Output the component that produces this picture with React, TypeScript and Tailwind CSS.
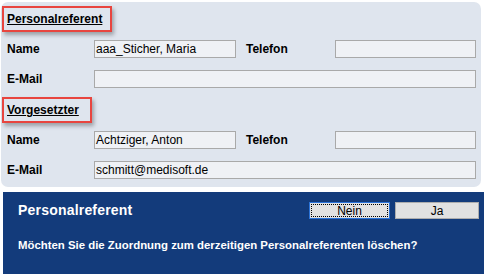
const font = { fontFamily: '"Liberation Sans", Arial, sans-serif' };

const Field: React.FC<{ value?: string; className?: string }> = ({ value, className }) => (
  <div
    className={`h-[18px] border border-[#a9a9a9] bg-[#eff1f5] px-[1px] text-[12px] leading-[16px] text-black whitespace-nowrap overflow-hidden ${className ?? ""}`}
  >
    {value}
  </div>
);

const Heading: React.FC<{ title: string; width: string }> = ({ title, width }) => (
  <div
    className={`ml-[1px] h-[26px] ${width} border-2 border-[#e8453f] pl-[3px] flex items-center shadow-[2px_3px_4px_rgba(0,0,0,0.3)]`}
  >
    <span className="text-[12px] font-bold underline text-black leading-none">{title}</span>
  </div>
);

const Section: React.FC<{
  title: string;
  width: string;
  name: string;
  phone: string;
  mail: string;
}> = ({ title, width, name, phone, mail }) => (
  <div className="flex flex-col">
    <Heading title={title} width={width} />
    <div className="mt-[8px] flex items-center h-[18px]">
      <span className="w-[93px] pl-[6px] text-[12px] font-bold text-black">Name</span>
      <Field value={name} className="w-[142px]" />
      <span className="w-[99px] pl-[10px] text-[12px] font-bold text-black">Telefon</span>
      <Field value={phone} className="w-[141px]" />
    </div>
    <div className="mt-[12px] flex items-center h-[18px]">
      <span className="w-[93px] pl-[6px] text-[12px] font-bold text-black">E-Mail</span>
      <Field value={mail} className="w-[382px]" />
    </div>
  </div>
);

export default function App() {
  return (
    <div className="w-[484px] h-[274px] bg-white overflow-hidden" style={font}>
      <div className="ml-[1px] mt-[2px] w-[480px] h-[185px] rounded-[7px] bg-[#dfe5ee] pt-[4px] flex flex-col gap-[9px]">
        <Section
          title="Personalreferent"
          width="w-[110px]"
          name="aaa_Sticher, Maria"
          phone=""
          mail=""
        />
        <Section
          title="Vorgesetzter"
          width="w-[90px]"
          name="Achtziger, Anton"
          phone=""
          mail="schmitt@medisoft.de"
        />
      </div>
      <div className="ml-[3px] mt-[5px] h-[82px] bg-[#133b7b] pl-[15px] pr-[5px] pt-[10px]">
        <div className="flex items-center h-[17px]">
          <span className="flex-1 text-[14px] font-bold text-white tracking-[0.2px]">Personalreferent</span>
          <button className="w-[81px] h-[17px] mr-[5px] bg-[#e1e1e1] border border-[#2b73d8] outline outline-1 outline-dotted outline-black -outline-offset-3 text-[12px] leading-none text-black">
            Nein
          </button>
          <button className="w-[84px] h-[17px] bg-[#e1e1e1] border border-[#adadad] text-[12px] leading-none text-black">
            Ja
          </button>
        </div>
        <div className="mt-[18px] text-[11.4px] font-bold text-white">
          Möchten Sie die Zuordnung zum derzeitigen Personalreferenten löschen?
        </div>
      </div>
    </div>
  );
}
